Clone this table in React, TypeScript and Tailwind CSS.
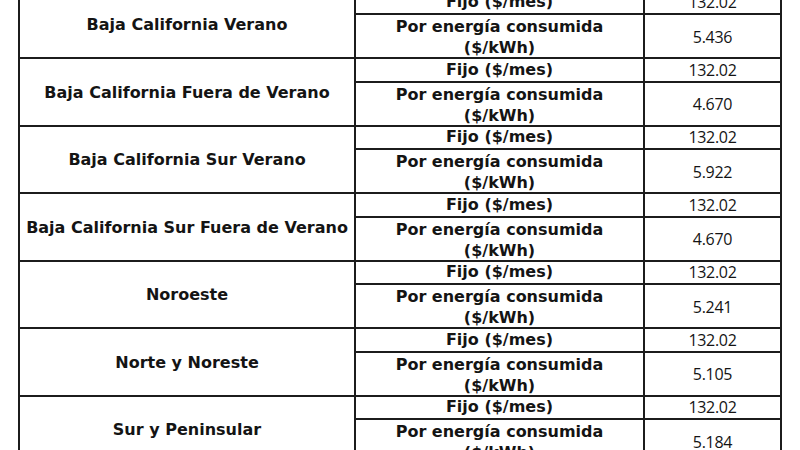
const regions = [
  { name: "Baja California Verano", fijo: "132.02", energia: "5.436" },
  { name: "Baja California Fuera de Verano", fijo: "132.02", energia: "4.670" },
  { name: "Baja California Sur Verano", fijo: "132.02", energia: "5.922" },
  { name: "Baja California Sur Fuera de Verano", fijo: "132.02", energia: "4.670" },
  { name: "Noroeste", fijo: "132.02", energia: "5.241" },
  { name: "Norte y Noreste", fijo: "132.02", energia: "5.105" },
  { name: "Sur y Peninsular", fijo: "132.02", energia: "5.184" }
];

function RegionRow({ name, fijo, energia }: { name: string; fijo: string; energia: string }) {
  return (
    <div className="flex h-[67.5px] border-b-2 border-[#1c1c1c]">
      <div className="w-[336px] shrink-0 pt-[2px] border-r-2 border-[#1c1c1c] flex items-center justify-center font-bold">
        {name}
      </div>
      <div className="flex-1 flex flex-col">
        <div className="flex h-[23.5px] border-b-2 border-[#1c1c1c]">
          <div className="w-[289px] shrink-0 border-r-2 border-[#1c1c1c] flex items-center justify-center font-bold">
            Fijo ($/mes)
          </div>
          <div className="flex-1 flex items-center justify-center font-['Open_Sans',sans-serif] tracking-[-0.3px]">
            {fijo}
          </div>
        </div>
        <div className="flex flex-1">
          <div className="w-[289px] shrink-0 pt-[1px] border-r-2 border-[#1c1c1c] flex items-center justify-center text-center font-bold leading-[21px]">
            Por energía consumida
            <br />
            ($/kWh)
          </div>
          <div className="flex-1 flex items-center justify-center font-['Open_Sans',sans-serif] tracking-[-0.3px]">
            {energia}
          </div>
        </div>
      </div>
    </div>
  );
}

export default function App() {
  return (
    <div className="w-[800px] h-[450px] overflow-hidden bg-white text-[#141414] text-[16px] font-['DejaVu_Sans',sans-serif]">
      <div className="ml-[18px] w-[764px] -mt-[8.5px] border-x-2 border-[#1c1c1c]">
        {regions.map((r) => (
          <RegionRow key={r.name} {...r} />
        ))}
      </div>
    </div>
  );
}
